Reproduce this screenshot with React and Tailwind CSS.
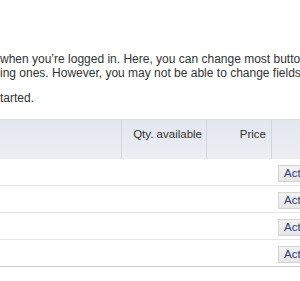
const rows = [1, 2, 3, 4];

const App = () => {
  return (
    <div
      className="w-[300px] h-[281px] overflow-hidden bg-white text-[12px] text-[#333]"
      style={{ fontFamily: '"Liberation Sans", Arial, sans-serif' }}
    >
      <div className="w-[640px] pt-[52px]">
        <p className="leading-[14px]">
          <span className="block whitespace-nowrap">
            when you’re logged in. Here, you can change most buttons and texts, and add new
          </span>
          <span className="block whitespace-nowrap">
            ing ones. However, you may not be able to change fields that are already in use.
          </span>
        </p>
        <p className="mt-[11px] leading-[14px] whitespace-nowrap">tarted.</p>

        <div className="mt-[14px] border-t border-[#dcdcdc]">
          {/* header */}
          <div className="flex h-[39px] bg-gradient-to-b from-[#e3e7ee] to-[#eceef3] text-[11.5px]">
            <div className="w-[122px] border-r border-[#d2d5db]" />
            <div className="w-[85px] border-r border-[#d2d5db] pt-[6px] pr-[4px] text-right">
              Qty. available
            </div>
            <div className="w-[65px] border-r border-[#d2d5db] pt-[6px] pr-[5px] text-right">
              Price
            </div>
            <div className="flex-1" />
          </div>

          {/* rows */}
          {rows.map((r, i) => (
            <div
              key={r}
              className={`flex h-[27px] border-b ${i === rows.length - 1 ? 'border-[#c9c9c9]' : 'border-[#e6e6e6]'}`}
            >
              <div className="w-[278px]" />
              <div className="pt-[5px]">
                <button className="h-[17px] px-[5px] leading-[15px] text-[11.5px] bg-gradient-to-b from-[#f3f3f3] to-[#e6e6e6] border border-[#d4d4d4] text-[#2e3c78]">
                  Action
                </button>
              </div>
            </div>
          ))}
        </div>
      </div>
    </div>
  );
};

export default App;
